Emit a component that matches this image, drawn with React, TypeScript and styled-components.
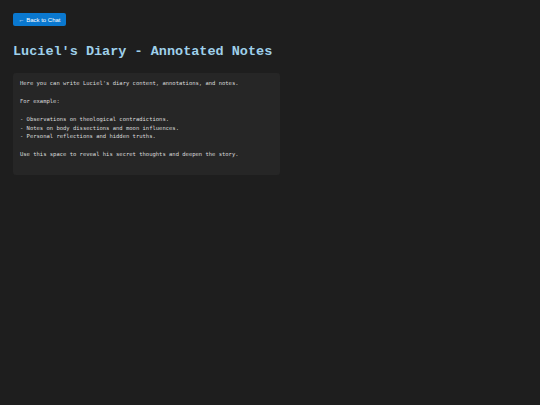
import styled, { createGlobalStyle } from "styled-components";

const GlobalStyle = createGlobalStyle`
  html, body {
    margin: 0;
    background: #1e1e1e;
    height: 100%;
  }
  body {
    font-family: "Liberation Sans", Arial, sans-serif;
  }
`;

const Page = styled.div`
  padding: 13px;
  display: flex;
  flex-direction: column;
  align-items: flex-start;
`;

const BackButton = styled.button`
  height: 13px;
  width: 53px;
  padding: 0;
  border: none;
  border-radius: 2px;
  background: #0a78cf;
  color: #ffffff;
  font-family: "Liberation Sans", Arial, sans-serif;
  font-size: 6px;
  cursor: pointer;
`;

const Title = styled.h1`
  margin: 18px 0 13px;
  font-family: "Liberation Mono", "Courier New", monospace;
  font-weight: bold;
  font-size: 13.5px;
  line-height: 16px;
  color: #9fd0ea;
`;

const NotesBox = styled.div`
  width: 267px;
  box-sizing: border-box;
  padding: 6px 7px 16px;
  background: #262626;
  border-radius: 3px;
  color: #dcdcdc;
  font-family: "DejaVu Sans Mono", monospace;
  font-size: 5.5px;
  line-height: 8.9px;
  white-space: pre-wrap;
`;

const notes = `Here you can write Luciel's diary content, annotations, and notes.

For example:

- Observations on theological contradictions.
- Notes on body dissections and moon influences.
- Personal reflections and hidden truths.

Use this space to reveal his secret thoughts and deepen the story.`;

export default function App() {
  return (
    <>
      <GlobalStyle />
      <Page>
        <BackButton>← Back to Chat</BackButton>
        <Title>Luciel's Diary - Annotated Notes</Title>
        <NotesBox>{notes}</NotesBox>
      </Page>
    </>
  );
}
